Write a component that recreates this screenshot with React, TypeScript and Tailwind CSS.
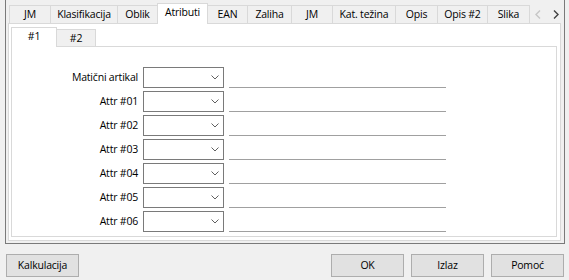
import React from "react";

type Tab = { label: string; w: number; sel?: boolean; noL?: boolean; lastR?: boolean };

const outerTabs: Tab[] = [
  { label: "JM", w: 41 },
  { label: "Klasifikacija", w: 67 },
  { label: "Oblik", w: 40 },
  { label: "Atributi", w: 51, sel: true },
  { label: "EAN", w: 39, noL: true },
  { label: "Zaliha", w: 44 },
  { label: "JM", w: 41 },
  { label: "Kat. težina", w: 63 },
  { label: "Opis", w: 42 },
  { label: "Opis #2", w: 50 },
  { label: "Slika", w: 43, lastR: true },
];

const rows = ["Matični artikal", "Attr #01", "Attr #02", "Attr #03", "Attr #04", "Attr #05", "Attr #06"];

function Chevron() {
  return (
    <svg width="8" height="5" viewBox="0 0 8 5" className="block">
      <path d="M0.5 0.5 L4 4 L7.5 0.5" fill="none" stroke="#606060" strokeWidth="1" />
    </svg>
  );
}

function Button({ label, className = "" }: { label: string; className?: string }) {
  return (
    <div
      className={
        "w-[73px] h-[23px] border border-[#adadad] bg-[#e1e1e1] flex items-center justify-center text-black " +
        className
      }
    >
      {label}
    </div>
  );
}

export default function App() {
  return (
    <div className="w-[569px] h-[280px] bg-[#f0f0f0] overflow-hidden text-[10.5px] tracking-[-0.2px] leading-none text-black font-['Open_Sans','Noto_Sans',sans-serif]">
      {/* frame */}
      <div className="ml-[5px] w-[560px] h-[244px] border-x border-b border-[#7a7a7a] pt-[3px] pl-[2px]">
        {/* outer tab strip */}
        <div className="flex items-end h-[20px] pl-[1px] w-[553px]">
          {outerTabs.map((t, i) =>
            t.sel ? (
              <div
                key={i}
                style={{ width: t.w }}
                className="relative z-10 h-[21px] -mb-px bg-white border-x border-t border-[#d9d9d9] flex items-center justify-center pb-[3px]"
              >
                {t.label}
              </div>
            ) : (
              <div
                key={i}
                style={{ width: t.w }}
                className={
                  "h-[18px] bg-[#f0f0f0] border-t border-[#d9d9d9] flex items-center justify-center " +
                  (t.noL ? "" : "border-l ") +
                  (t.lastR ? "border-r" : "")
                }
              >
                {t.label}
              </div>
            )
          )}
          <div className="flex-1 h-[20px] flex items-start pt-[7px] pl-[5px] gap-[12px]">
            <svg width="6" height="9" viewBox="0 0 6 9" className="block">
              <path d="M5 0.5 L1 4.5 L5 8.5" fill="none" stroke="#c6c6c6" strokeWidth="1.4" />
            </svg>
            <svg width="6" height="9" viewBox="0 0 6 9" className="block">
              <path d="M1 0.5 L5 4.5 L1 8.5" fill="none" stroke="#404040" strokeWidth="1.4" />
            </svg>
          </div>
        </div>
        {/* outer page */}
        <div className="w-[553px] h-[218px] border border-[#d9d9d9] bg-white pt-[3px] pl-[2px]">
          {/* inner tab strip */}
          <div className="flex items-end h-[19px]">
            <div className="relative z-10 w-[46px] h-[20px] -mb-px bg-white border-x border-t border-[#d9d9d9] flex items-center justify-center pb-[3px]">
              #1
            </div>
            <div className="w-[39px] h-[17px] bg-[#f0f0f0] border-t border-r border-[#d9d9d9] flex items-center justify-center">
              #2
            </div>
          </div>
          {/* inner page */}
          <div className="w-[546px] h-[191px] border border-[#d9d9d9] bg-white pt-[20px] flex flex-col gap-[3px]">
            {rows.map((r) => (
              <div key={r} className="flex h-[21px]">
                <div className="w-[126px] flex items-center justify-end">{r}</div>
                <div className="ml-[5px] w-[81px] h-[21px] border border-[#7a7a7a] bg-white flex items-center justify-end pr-[4px]">
                  <Chevron />
                </div>
                <div className="ml-[5px] w-[217px] h-px self-end bg-[#a0a0a0]" />
              </div>
            ))}
          </div>
        </div>
      </div>
      {/* buttons */}
      <div className="flex mt-[10px]">
        <Button label="Kalkulacija" className="ml-[6px]" />
        <Button label="OK" className="ml-[252px]" />
        <Button label="Izlaz" className="ml-[7px]" />
        <Button label="Pomoć" className="ml-[7px]" />
      </div>
    </div>
  );
}
